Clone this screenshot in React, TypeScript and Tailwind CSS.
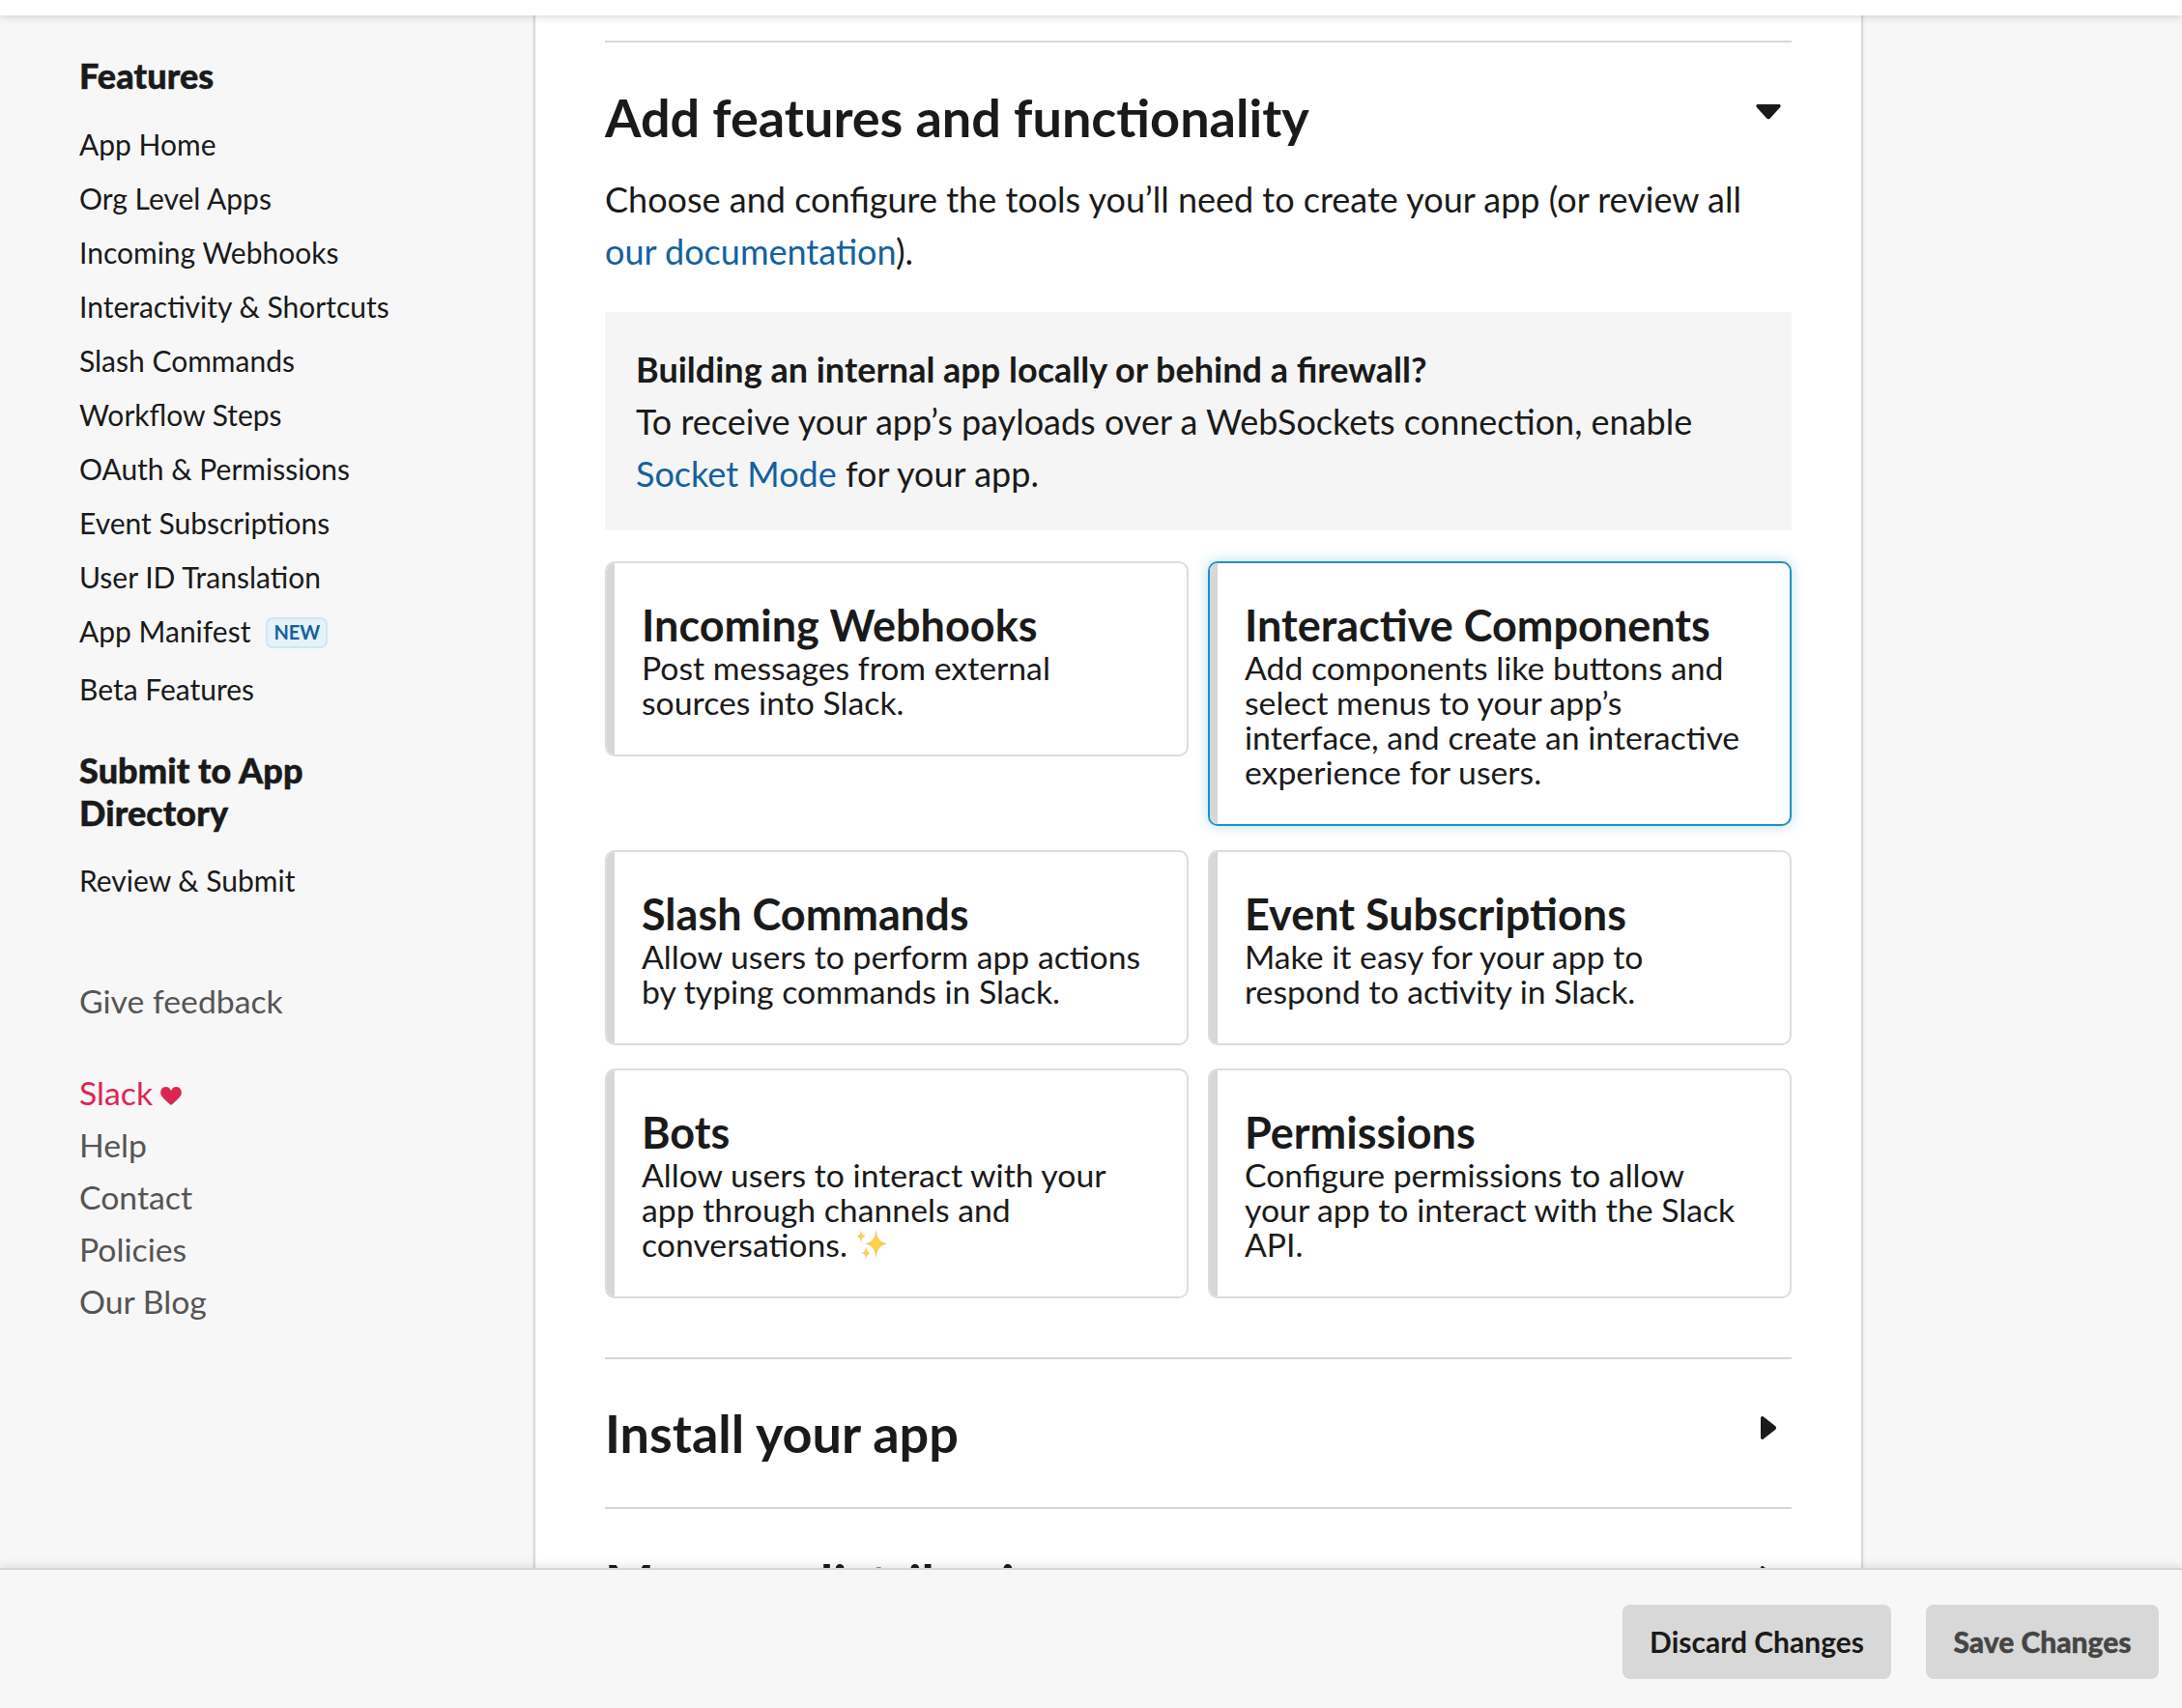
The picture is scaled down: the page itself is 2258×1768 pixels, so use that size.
import type { ReactNode } from "react";

const features = [
  "App Home",
  "Org Level Apps",
  "Incoming Webhooks",
  "Interactivity & Shortcuts",
  "Slash Commands",
  "Workflow Steps",
  "OAuth & Permissions",
  "Event Subscriptions",
  "User ID Translation",
];

const footerLinks = ["Help", "Contact", "Policies", "Our Blog"];

function Heart() {
  return (
    <svg viewBox="0 0 22 19" className="ml-2 mt-[7px] h-[19px] w-[22px]" fill="currentColor">
      <path d="M11 19C10.400 19 1.900 11.200.7 8.600-.9 4.800 1.200 0 5.600 0 8.200 0 10.200 1.500 11 4.300 11.800 1.500 13.800 0 16.400 0 20.800 0 22.900 4.800 21.300 8.600 20.100 11.200 11.600 19 11 19Z" />
    </svg>
  );
}

function Sparkles() {
  return (
    <svg viewBox="0 0 32 32" className="-my-1 inline-block h-8 w-8 align-[1px]">
      <defs>
        <radialGradient id="spark">
          <stop offset="0" stopColor="#ffd84a" />
          <stop offset="0.5" stopColor="#fbcb4d" />
          <stop offset="1" stopColor="#f0a27c" />
        </radialGradient>
      </defs>
      <g fill="url(#spark)">
        <path d="M20.500 1Q21.400 13.700 31.700 15.500Q21.400 17.300 20.500 30.500Q19.600 17.300 9.500 15.500Q19.600 13.700 20.500 1Z" />
        <path d="M5 1.500Q5.600 7.100 9.600 7.700Q5.600 8.400 5 14Q4.400 8.400.6 7.700Q4.400 7.100 5 1.500Z" />
        <path d="M10.300 19Q10.900 24.400 14.800 25Q10.900 25.700 10.300 31Q9.700 25.700 5.600 25Q9.700 24.400 10.300 19Z" />
      </g>
    </svg>
  );
}

function Caret({ open = false }: { open?: boolean }) {
  return (
    <svg viewBox="0 0 26 26" className="mr-[11px] mt-[14px] h-[26px] w-[26px] shrink-0" fill="#1a1a1a">
      {open ? (
        <path d="M2.200 5H23.800C25.800 5 26.200 6.800 25 8.200L15.200 19C13.900 20.600 12.100 20.600 10.800 19L1 8.200C-.2 6.800.2 5 2.200 5Z" />
      ) : (
        <path d="M5 3C5 .8 7.100.4 8.500 1.900L20 10.900C21.400 12.200 21.400 13.800 20 15.100L8.500 24.100C7.100 25.600 5 25.200 5 23Z" />
      )}
    </svg>
  );
}

function Section({ title, open, className, children }: { title: string; open?: boolean; className: string; children?: ReactNode }) {
  return (
    <section className={`border-t-2 border-[#d6d6d6] ${className}`}>
      <div className="flex items-start justify-between">
        <h2 className="text-[54px] font-bold leading-[65px]">{title}</h2>
        <Caret open={open} />
      </div>
      {children}
    </section>
  );
}

function Card({ title, active, children }: { title: string; active?: boolean; children: ReactNode }) {
  return (
    <div
      className={`flex overflow-hidden rounded-[10px] border-2 bg-white ${
        active ? "border-[#1c92cc] shadow-[0_0_14px_rgba(29,155,209,0.32)]" : "border-[#dddddd]"
      }`}
    >
      <div className="w-2 shrink-0 bg-[#d7d7d7]" />
      <div className="pb-9 pl-7 pr-9 pt-[37px]">
        <h3 className="-mb-px text-[45px] font-bold leading-[54px]">{title}</h3>
        <p className="text-[33.75px] leading-9">{children}</p>
      </div>
    </div>
  );
}

export default function App() {
  return (
    <div className="flex h-[1768px] w-[2258px] flex-col overflow-hidden bg-[#f7f7f7] font-['Lato',sans-serif] text-[#1a1a1a]">
      <header className="relative z-10 h-4 shrink-0 bg-white shadow-[0_1px_10px_rgba(0,0,0,0.18)]" />
      <div className="flex min-h-0 flex-1 overflow-hidden">
        <aside className="w-[552px] shrink-0 pl-[82px] pt-10">
          <h4 className="font-['Lato_Black','Lato'] text-[36px] font-black leading-[44px] tracking-[0.1px] [-webkit-text-stroke:0.5px]">Features</h4>
          <ul className="mt-[21px] text-[30px] leading-[56px]">
            {features.map((f) => (
              <li key={f}>{f}</li>
            ))}
            <li className="flex h-[60px] items-start">
              App Manifest
              <span className="ml-4 mt-[14px] flex h-8 w-16 items-center justify-center rounded-[7px] border-2 border-[#cbe8f2] bg-[#e5f2f8] pb-0.5 text-[20px] font-bold leading-[26px] text-[#13619f]">
                NEW
              </span>
            </li>
            <li>Beta Features</li>
          </ul>
          <h4 className="mt-[34px] w-[260px] font-['Lato_Black','Lato'] text-[36px] font-black leading-[44px] tracking-[0.1px] [-webkit-text-stroke:0.5px]">
            Submit to App Directory
          </h4>
          <p className="mt-5 text-[30px] leading-[56px]">Review & Submit</p>
          <div className="mt-[70px] text-[33.75px] leading-[54px] text-[#555555]">
            <p>Give feedback</p>
            <p className="mt-[41px] flex items-center text-[#dd2553]">
              Slack
              <Heart />
            </p>
            {footerLinks.map((l) => (
              <p key={l}>{l}</p>
            ))}
          </div>
        </aside>

        <main className="w-[1376px] shrink-0 border-x-2 border-[#d8d8d8] bg-white px-[72px] pt-[26px] shadow-[0_0_3px_rgba(0,0,0,0.08)]">
          <Section title="Add features and functionality" open className="pb-[61px] pt-[45px]">
            <p className="mt-[25px] text-[36px] leading-[54px]">
              Choose and configure the tools you’ll need to create your app (or review all{" "}
              <a className="text-[#13619f]">our documentation</a>).
            </p>
            <div className="mt-9 bg-[#f5f5f5] p-8 text-[36px] leading-[54px]">
              <p className="font-bold">Building an internal app locally or behind a firewall?</p>
              <p>
                To receive your app’s payloads over a WebSockets connection, enable{" "}
                <a className="text-[#13619f]">Socket Mode</a> for your app.
              </p>
            </div>
            <div className="mt-8 grid grid-cols-2 items-start gap-x-5 gap-y-[24.5px]">
              <Card title="Incoming Webhooks">Post messages from external sources into Slack.</Card>
              <Card title="Interactive Components" active>
                Add components like buttons and select menus to your app’s interface, and create an interactive experience for users.
              </Card>
              <Card title="Slash Commands">Allow users to perform app actions by typing commands in Slack.</Card>
              <Card title="Event Subscriptions">Make it easy for your app to respond to activity in Slack.</Card>
              <Card title="Bots">
                Allow users to interact with your app through channels and conversations. <Sparkles />
              </Card>
              <Card title="Permissions">Configure permissions to allow your app to interact with the Slack API.</Card>
            </div>
          </Section>
          <Section title="Install your app" className="pb-11 pt-11" />
          <Section title="Manage distribution" className="pb-11 pt-11" />
        </main>
      </div>

      <footer className="relative z-10 flex h-[145px] shrink-0 items-start justify-end gap-9 border-t-2 border-[#d6d6d6] bg-[#f7f7f7] pr-6 pt-9 shadow-[0_-1px_10px_rgba(0,0,0,0.13)]">
        <button className="h-[77px] w-[278px] rounded-lg bg-[#d8d8d8] text-[30px] font-bold">Discard Changes</button>
        <button className="h-[77px] w-[241px] rounded-lg bg-[#d8d8d8] font-['Lato_Black','Lato'] text-[30px] font-black text-[#454545] [-webkit-text-stroke:0.4px]">Save Changes</button>
      </footer>
    </div>
  );
}
